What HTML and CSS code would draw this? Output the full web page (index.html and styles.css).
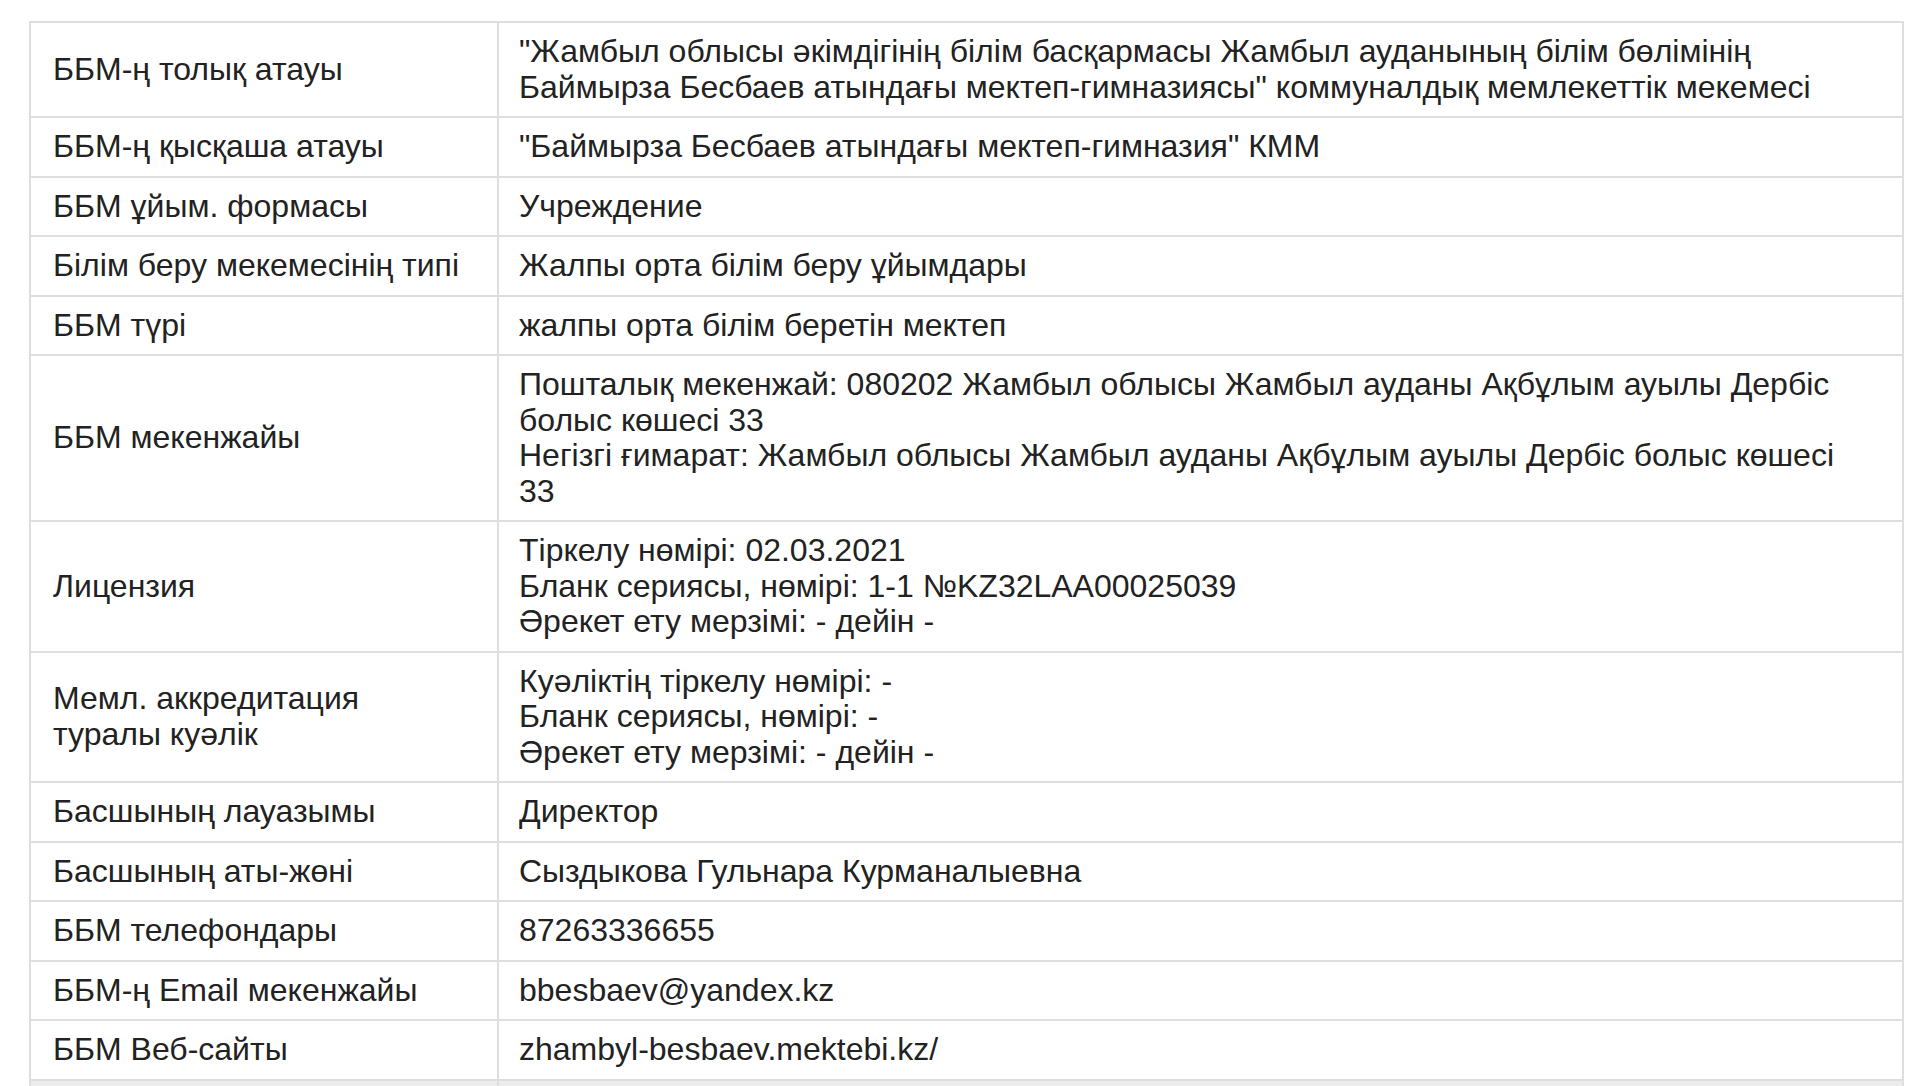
FILE: index.html
```html
<!DOCTYPE html>
<html lang="kk">
<head>
  <meta charset="UTF-8" />
  <meta name="viewport" content="width=device-width, initial-scale=1.0"/>
  <title>ББМ туралы мәліметтер</title>
  <link rel="stylesheet" href="styles.css">
</head>
<body>
  <div class="wrap">
    <table class="info-table">
      <tr>
        <td class="label">ББМ-ң толық атауы</td>
        <td>"Жамбыл облысы әкімдігінің білім басқармасы Жамбыл ауданының білім бөлімінің Баймырза Бесбаев атындағы мектеп-гимназиясы" коммуналдық мемлекеттік мекемесі</td>
      </tr>
      <tr>
        <td class="label">ББМ-ң қысқаша атауы</td>
        <td>"Баймырза Бесбаев атындағы мектеп-гимназия" КММ</td>
      </tr>
      <tr>
        <td class="label">ББМ ұйым. формасы</td>
        <td>Учреждение</td>
      </tr>
      <tr>
        <td class="label">Білім беру мекемесінің типі</td>
        <td>Жалпы орта білім беру ұйымдары</td>
      </tr>
      <tr>
        <td class="label">ББМ түрі</td>
        <td>жалпы орта білім беретін мектеп</td>
      </tr>
      <tr>
        <td class="label">ББМ мекенжайы</td>
        <td>Пошталық мекенжай: 080202 Жамбыл облысы Жамбыл ауданы Ақбұлым ауылы Дербіс болыс көшесі 33<br/>
          Негізгі ғимарат: Жамбыл облысы Жамбыл ауданы Ақбұлым ауылы Дербіс болыс көшесі 33</td>
      </tr>
      <tr>
        <td class="label">Лицензия</td>
        <td>Тіркелу нөмірі: 02.03.2021<br/>
          Бланк сериясы, нөмірі: 1-1 №KZ32LAA00025039<br/>
          Әрекет ету мерзімі: - дейін -</td>
      </tr>
      <tr>
        <td class="label">Мемл. аккредитация туралы куәлік</td>
        <td>Куәліктің тіркелу нөмірі: -<br/>
          Бланк сериясы, нөмірі: -<br/>
          Әрекет ету мерзімі: - дейін -</td>
      </tr>
      <tr>
        <td class="label">Басшының лауазымы</td>
        <td>Директор</td>
      </tr>
      <tr>
        <td class="label">Басшының аты-жөні</td>
        <td>Сыздыкова Гульнара Курманалыевна</td>
      </tr>
      <tr>
        <td class="label">ББМ телефондары</td>
        <td>87263336655</td>
      </tr>
      <tr>
        <td class="label">ББМ-ң Email мекенжайы</td>
        <td>bbesbaev@yandex.kz</td>
      </tr>
      <tr>
        <td class="label">ББМ Веб-сайты</td>
        <td>zhambyl-besbaev.mektebi.kz/</td>
      </tr>
      <tr class="more-row">
        <td class="label">&nbsp;</td>
        <td>&nbsp;</td>
      </tr>
    </table>
  </div>
</body>
</html>
```

FILE: styles.css
```css
body {
  margin: 0;
  padding: 0;
  font-family: "Liberation Sans", Arial, sans-serif;
  background: #fff;
  overflow: hidden;
}

.wrap {
  padding: 21px 16px 0 29px;
}

.info-table {
  width: 1875px;
  border-collapse: collapse;
  font-size: 32px;
  line-height: 35.5px;
  color: #222;
}

.info-table td {
  border: 2px solid #dedede;
  padding: 11px 24px 11px 20px;
  vertical-align: middle;
  text-align: left;
}

.info-table td.label {
  width: 414px;
  padding-left: 22px;
  padding-right: 30px;
}

.more-row td {
  background: #ececec;
}
```
